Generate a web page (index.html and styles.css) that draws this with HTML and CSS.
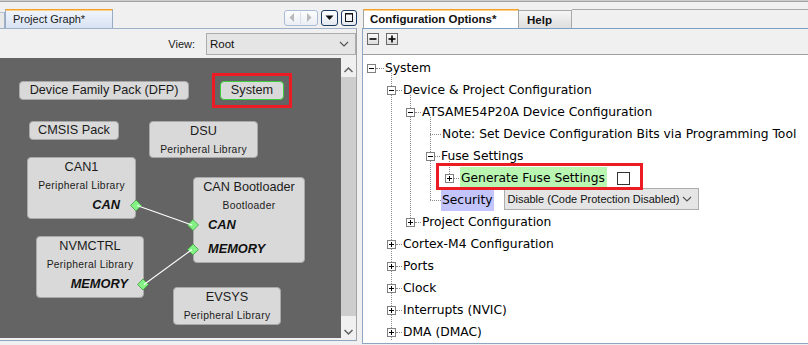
FILE: index.html
```html
<!DOCTYPE html>
<html>
<head>
<meta charset="utf-8">
<title>MHC</title>
<link rel="stylesheet" href="styles.css">
</head>
<body>
<div class="topline"></div>
<div class="main">
  <section class="left">
    <div class="tabstrip">
      <div class="tab-stub"></div>
      <div class="tab-left">Project Graph*</div>
      <div class="tab-fill"></div>
      <div class="navbtns">
        <div class="nav-arrows">
          <svg width="34" height="16" viewBox="0 0 34 16">
            <line x1="16.5" y1="2" x2="16.5" y2="14" stroke="#d7dfe9" stroke-width="1"/>
            <polygon points="10,3 10,12 5.5,7.5" fill="#b9b9b9"/>
            <polygon points="23,3 23,12 27.5,7.5" fill="#b9b9b9"/>
          </svg>
        </div>
        <div class="nav-btn nav-down">
          <svg width="15" height="14" viewBox="0 0 15 14">
            <polygon points="3.5,4.5 11.5,4.5 7.5,9" fill="#111"/>
          </svg>
        </div>
        <div class="nav-btn nav-max">
          <svg width="14" height="14" viewBox="0 0 14 14">
            <rect x="3.5" y="2.5" width="7" height="8" fill="none" stroke="#111" stroke-width="1"/>
            <line x1="3.5" y1="3" x2="10.5" y2="3" stroke="#111" stroke-width="1"/>
          </svg>
        </div>
      </div>
    </div>
    <div class="left-body">
      <div class="viewbar">
        <span class="view-label">View:</span>
        <div class="combo combo-root">
          <span class="combo-text">Root</span>
          <svg class="chev" width="10" height="6" viewBox="0 0 10 6"><polyline points="1,1 5,5 9,1" fill="none" stroke="#555" stroke-width="1.2"/></svg>
        </div>
      </div>
      <div class="graph-row">
        <div class="canvas">
          <div class="node single n-dfp"><div class="nt">Device Family Pack (DFP)</div></div>
          <div class="node single n-sys"><div class="nt">System</div></div>
          <div class="redbox rb-sys"></div>
          <div class="node single n-cmsis"><div class="nt">CMSIS Pack</div></div>
          <div class="node n-dsu"><div class="nt">DSU</div><div class="ns">Peripheral Library</div></div>
          <div class="node n-can1"><div class="nt">CAN1</div><div class="ns">Peripheral Library</div><div class="np pr">CAN</div></div>
          <div class="node n-boot"><div class="nt">CAN Bootloader</div><div class="ns">Bootloader</div><div class="np pl">CAN</div><div class="np pl last">MEMORY</div></div>
          <div class="node n-nvm"><div class="nt">NVMCTRL</div><div class="ns">Peripheral Library</div><div class="np pr">MEMORY</div></div>
          <div class="node n-evsys"><div class="nt">EVSYS</div><div class="ns">Peripheral Library</div></div>
          <svg class="wires" width="341" height="280" viewBox="0 0 341 280">
            <polygon points="136,142 141.5,147.5 136,153 130.5,147.5" fill="#84f184" stroke="#3f9a3f" stroke-width="0.8"/>
            <polygon points="193,161.5 198.5,167 193,172.5 187.5,167" fill="#84f184" stroke="#3f9a3f" stroke-width="0.8"/>
            <polygon points="193,186 198.5,191.5 193,197 187.5,191.5" fill="#84f184" stroke="#3f9a3f" stroke-width="0.8"/>
            <polygon points="143,221 148.5,226.5 143,232 137.5,226.5" fill="#84f184" stroke="#3f9a3f" stroke-width="0.8"/>
            <line x1="137" y1="147.5" x2="192" y2="167" stroke="#ffffff" stroke-width="1.1"/>
            <line x1="144" y1="226.5" x2="192" y2="191.5" stroke="#ffffff" stroke-width="1.1"/>
          </svg>
        </div>
        <div class="vscroll">
          <div class="sb-up">
            <svg width="15" height="19" viewBox="0 0 15 19"><polyline points="3.5,14 7.5,10 11.5,14" fill="none" stroke="#606060" stroke-width="1.5"/></svg>
          </div>
          <div class="sb-thumb"></div>
          <div class="sb-down">
            <svg width="15" height="22" viewBox="0 0 15 22"><polyline points="3.5,14 7.5,18 11.5,14" fill="none" stroke="#606060" stroke-width="1.5"/></svg>
          </div>
        </div>
      </div>
    </div>
  </section>

  <section class="right">
    <div class="rtabstrip">
      <div class="ctab">Configuration Options*</div>
      <div class="htab">Help</div>
      <div class="rfill"></div>
    </div>
    <div class="right-body">
      <div class="toolbar">
        <div class="tbtn">
          <svg width="10" height="10" viewBox="0 0 10 10"><line x1="1.5" y1="5" x2="8.5" y2="5" stroke="#000" stroke-width="1.6"/></svg>
        </div>
        <div class="tbtn">
          <svg width="10" height="10" viewBox="0 0 10 10"><line x1="1.5" y1="5" x2="8.5" y2="5" stroke="#000" stroke-width="1.6"/><line x1="5" y1="1.5" x2="5" y2="8.5" stroke="#000" stroke-width="1.6"/></svg>
        </div>
      </div>
      <div class="tree">
        <svg class="guides" width="445" height="285" viewBox="0 0 445 285">
          <g stroke="#8a8a8a" stroke-width="1" stroke-dasharray="1 1">
            <line x1="28.5" y1="18" x2="28.5" y2="285"/>
            <line x1="47.5" y1="40" x2="47.5" y2="167"/>
            <line x1="67.5" y1="62" x2="67.5" y2="145"/>
            <line x1="86.5" y1="106" x2="86.5" y2="123"/>
          </g>
        </svg>

        <div class="row l0"><span class="exp"><svg width="9" height="9" viewBox="0 0 9 9"><rect x="0.5" y="0.5" width="8" height="8" fill="#fff" stroke="#808080"/><line x1="2" y1="4.5" x2="7" y2="4.5" stroke="#000"/></svg></span><span class="dash"></span><span class="label">System</span></div>
        <div class="row l1"><span class="exp"><svg width="9" height="9" viewBox="0 0 9 9"><rect x="0.5" y="0.5" width="8" height="8" fill="#fff" stroke="#808080"/><line x1="2" y1="4.5" x2="7" y2="4.5" stroke="#000"/></svg></span><span class="dash"></span><span class="label">Device &amp; Project Configuration</span></div>
        <div class="row l2"><span class="exp"><svg width="9" height="9" viewBox="0 0 9 9"><rect x="0.5" y="0.5" width="8" height="8" fill="#fff" stroke="#808080"/><line x1="2" y1="4.5" x2="7" y2="4.5" stroke="#000"/></svg></span><span class="dash"></span><span class="label">ATSAME54P20A Device Configuration</span></div>
        <div class="row leaf3"><span class="dash"></span><span class="label">Note: Set Device Configuration Bits via Programming Tool</span></div>
        <div class="row l3"><span class="exp"><svg width="9" height="9" viewBox="0 0 9 9"><rect x="0.5" y="0.5" width="8" height="8" fill="#fff" stroke="#808080"/><line x1="2" y1="4.5" x2="7" y2="4.5" stroke="#000"/></svg></span><span class="dash"></span><span class="label">Fuse Settings</span></div>
        <div class="row l4"><span class="exp"><svg width="9" height="9" viewBox="0 0 9 9"><rect x="0.5" y="0.5" width="8" height="8" fill="#fff" stroke="#808080"/><line x1="2" y1="4.5" x2="7" y2="4.5" stroke="#000"/><line x1="4.5" y1="2" x2="4.5" y2="7" stroke="#000"/></svg></span><span class="dash"></span><span class="label hl-green">Generate Fuse Settings</span><span class="checkbox"></span></div>
        <div class="row leaf3"><span class="dash"></span><span class="label hl-blue">Security</span>
          <div class="combo combo-sec"><span class="combo-text">Disable (Code Protection Disabled)</span><svg class="chev" width="10" height="6" viewBox="0 0 10 6"><polyline points="1,1 5,5 9,1" fill="none" stroke="#555" stroke-width="1.2"/></svg></div>
        </div>
        <div class="row l2"><span class="exp"><svg width="9" height="9" viewBox="0 0 9 9"><rect x="0.5" y="0.5" width="8" height="8" fill="#fff" stroke="#808080"/><line x1="2" y1="4.5" x2="7" y2="4.5" stroke="#000"/><line x1="4.5" y1="2" x2="4.5" y2="7" stroke="#000"/></svg></span><span class="dash"></span><span class="label">Project Configuration</span></div>
        <div class="row l1"><span class="exp"><svg width="9" height="9" viewBox="0 0 9 9"><rect x="0.5" y="0.5" width="8" height="8" fill="#fff" stroke="#808080"/><line x1="2" y1="4.5" x2="7" y2="4.5" stroke="#000"/><line x1="4.5" y1="2" x2="4.5" y2="7" stroke="#000"/></svg></span><span class="dash"></span><span class="label">Cortex-M4 Configuration</span></div>
        <div class="row l1"><span class="exp"><svg width="9" height="9" viewBox="0 0 9 9"><rect x="0.5" y="0.5" width="8" height="8" fill="#fff" stroke="#808080"/><line x1="2" y1="4.5" x2="7" y2="4.5" stroke="#000"/><line x1="4.5" y1="2" x2="4.5" y2="7" stroke="#000"/></svg></span><span class="dash"></span><span class="label">Ports</span></div>
        <div class="row l1"><span class="exp"><svg width="9" height="9" viewBox="0 0 9 9"><rect x="0.5" y="0.5" width="8" height="8" fill="#fff" stroke="#808080"/><line x1="2" y1="4.5" x2="7" y2="4.5" stroke="#000"/><line x1="4.5" y1="2" x2="4.5" y2="7" stroke="#000"/></svg></span><span class="dash"></span><span class="label">Clock</span></div>
        <div class="row l1"><span class="exp"><svg width="9" height="9" viewBox="0 0 9 9"><rect x="0.5" y="0.5" width="8" height="8" fill="#fff" stroke="#808080"/><line x1="2" y1="4.5" x2="7" y2="4.5" stroke="#000"/><line x1="4.5" y1="2" x2="4.5" y2="7" stroke="#000"/></svg></span><span class="dash"></span><span class="label">Interrupts (NVIC)</span></div>
        <div class="row l1"><span class="exp"><svg width="9" height="9" viewBox="0 0 9 9"><rect x="0.5" y="0.5" width="8" height="8" fill="#fff" stroke="#808080"/><line x1="2" y1="4.5" x2="7" y2="4.5" stroke="#000"/><line x1="4.5" y1="2" x2="4.5" y2="7" stroke="#000"/></svg></span><span class="dash"></span><span class="label">DMA (DMAC)</span></div>

        <div class="redbox rb-fuse"></div>
      </div>
    </div>
  </section>
</div>
</body>
</html>
```

FILE: styles.css
```css
* { box-sizing: border-box; }
html, body { margin: 0; padding: 0; }
body {
  width: 808px;
  height: 345px;
  overflow: hidden;
  background: #f0f0f0;
  font-family: "Liberation Sans", Arial, sans-serif;
  font-size: 11px;
  color: #111;
}

.topline {
  height: 2px;
  border-top: 1px solid #cdcdcd;
  border-bottom: 1px solid #a2a2a2;
}

.main {
  display: flex;
  height: 339px;
}

/* ---------- left panel ---------- */
.left {
  width: 357px;
  display: flex;
  flex-direction: column;
  flex: none;
}

.tabstrip {
  height: 26px;
  display: flex;
  align-items: flex-end;
  flex: none;
}

.tab-stub {
  width: 5px;
  height: 16px;
  background: #e9e9e9;
  border-top: 1px solid #b3c1d2;
  border-right: 1px solid #9fb1c7;
  flex: none;
}

.tab-left {
  width: 108px;
  height: 19px;
  flex: none;
  border: 1px solid #97abc5;
  border-bottom: none;
  border-top: 1px solid #f4a129;
  box-shadow: inset 0 1px 0 #fbd08c;
  background: linear-gradient(#f1f5fc, #d8e3f3);
  padding-left: 7px;
  line-height: 18px;
  font-size: 11px;
  color: #1a1a1a;
}

.tab-fill { flex: 1; }

.navbtns {
  align-self: flex-start;
  margin-top: 8px;
  display: flex;
  gap: 3px;
  flex: none;
}

.nav-arrows {
  width: 34px;
  height: 16px;
  border: 1px solid #a9bcd5;
  border-radius: 3px;
  background: linear-gradient(#fdfdfd, #eaeef4);
  overflow: hidden;
}
.nav-arrows svg { display: block; margin: -1px 0 0 -1px; }

.nav-btn {
  height: 16px;
  border: 1px solid #1d3a62;
  border-radius: 3px;
  background: linear-gradient(#ffffff, #e3e8ef);
  display: flex;
  align-items: center;
  justify-content: center;
}
.nav-down { width: 17px; }
.nav-max { width: 16px; }
.nav-btn svg { display: block; }

.left-body {
  flex: 1;
  display: flex;
  flex-direction: column;
  border-top: 1px solid #9fb1c8;
  border-right: 1px solid #a3a3a3;
  border-bottom: 1px solid #8ea5bf;
}

.viewbar {
  height: 29px;
  flex: none;
  display: flex;
  justify-content: flex-end;
  align-items: flex-start;
  padding-top: 4px;
}

.view-label {
  line-height: 22px;
  margin-right: 11px;
  font-size: 11px;
  color: #1a1a1a;
}

.combo {
  height: 22px;
  background: #e5e5e5;
  border: 1px solid #adadad;
  display: flex;
  align-items: center;
  justify-content: space-between;
  flex: none;
}
.combo-root { width: 150px; padding: 0 6px 0 3px; }
.combo-text { font-size: 11px; color: #111; white-space: nowrap; }
.combo-root .combo-text { font-size: 11.5px; }
.chev { display: block; flex: none; }

.graph-row {
  height: 280px;
  flex: none;
  display: flex;
}

.canvas {
  width: 341px;
  flex: none;
  background: #646464;
  position: relative;
  overflow: hidden;
}

.vscroll {
  width: 15px;
  flex: none;
  display: flex;
  flex-direction: column;
  background: #f0f0f0;
}
.sb-up { height: 19px; flex: none; }
.sb-thumb { height: 239px; flex: none; background: #cdcdcd; }
.sb-down { flex: 1; }
.vscroll svg { display: block; }

/* diagram nodes: placed on a free canvas */
.node {
  position: absolute;
  background: #d9d9d9;
  border: 1px solid #a9a9a9;
  border-radius: 4px;
  color: #1b1b1b;
  text-align: center;
  white-space: nowrap;
}
.nt { font-size: 12.7px; line-height: 18px; }
.single .nt { line-height: 17px; }
.ns { font-size: 10.3px; line-height: 19px; letter-spacing: 0.3px; }
.np { font-size: 12.8px; line-height: 19px; font-weight: bold; font-style: italic; color: #111; }
.np.pr { text-align: right; padding-right: 15px; }
.np.pl { text-align: left; padding-left: 14px; }
.np.last { line-height: 29px; }

.n-dfp { left: 19px; top: 23px; width: 170px; height: 19px; }
.n-sys { left: 220px; top: 23px; width: 64px; height: 19px; border-color: #3ccf3c; }
.n-cmsis { left: 29px; top: 63px; width: 90px; height: 19px; }
.n-dsu { left: 149px; top: 63px; width: 109px; height: 37px; }
.n-can1 { left: 27px; top: 99px; width: 109px; height: 62px; }
.n-boot { left: 193px; top: 119px; width: 112px; height: 86px; }
.n-nvm { left: 36px; top: 178px; width: 108px; height: 62px; }
.n-evsys { left: 173px; top: 229px; width: 108px; height: 38px; }

.wires { position: absolute; left: 0; top: 0; }

.redbox {
  position: absolute;
  border: 3px solid #ec1c24;
}
.rb-sys { left: 212px; top: 15px; width: 80px; height: 35px; }

/* ---------- right panel ---------- */
.right {
  flex: 1;
  margin-left: 5px;
  display: flex;
  flex-direction: column;
}

.rtabstrip {
  height: 26px;
  flex: none;
  display: flex;
  align-items: flex-end;
  padding-left: 1px;
}

.ctab {
  width: 156px;
  height: 19px;
  flex: none;
  background: #ffffff;
  border: 1px solid #a3a3a3;
  border-bottom: none;
  border-top: 1px solid #f4a129;
  box-shadow: inset 0 1px 0 #fbd08c;
  padding-left: 6px;
  line-height: 18px;
  font-weight: bold;
  font-size: 11.5px;
  color: #111;
}

.htab {
  width: 53px;
  height: 18px;
  flex: none;
  background: linear-gradient(#f6f6f6, #dedede);
  border: 1px solid #a8a8a8;
  border-left: none;
  border-bottom: none;
  padding-left: 8px;
  line-height: 18px;
  font-weight: bold;
  font-size: 11.5px;
  color: #111;
}

.rfill {
  flex: 1;
  height: 19px;
  border-top: 1px solid #a9a9a9;
}

.right-body {
  flex: 1;
  display: flex;
  flex-direction: column;
  border-top: 1px solid #7c9fc8;
  border-left: 1px solid #8ea6c1;
  border-bottom: 1px solid #8ea6c1;
}

.toolbar {
  height: 26px;
  flex: none;
  border-bottom: 1px solid #a0a0a0;
  display: flex;
  align-items: flex-start;
  gap: 7px;
  padding: 4px 0 0 4px;
}

.tbtn {
  width: 12px;
  height: 12px;
  border: 1px solid #6a6a6a;
  background: linear-gradient(#fafafa, #dcdcdc);
  display: flex;
  align-items: center;
  justify-content: center;
}
.tbtn svg { display: block; }

.tree {
  flex: 1;
  background: #ffffff;
  position: relative;
  overflow: hidden;
  padding-top: 2px;
}

.guides { position: absolute; left: 0; top: 0; z-index: 0; }

.row {
  position: relative;
  z-index: 1;
  height: 22px;
  display: flex;
  align-items: flex-start;
  white-space: nowrap;
}
.exp { width: 9px; height: 9px; margin-top: 7px; flex: none; }
.exp svg { display: block; }
.dash {
  height: 0;
  margin-top: 11px;
  border-top: 1px dotted #8a8a8a;
  flex: none;
}
.label {
  margin-left: 1px;
  line-height: 22px;
  font-family: "DejaVu Sans", Verdana, sans-serif;
  font-size: 12.3px;
  color: #000;
}

.l0 { padding-left: 4px; }
.l0 .dash { width: 8px; }
.l1 { padding-left: 24px; }
.l1 .dash { width: 6px; }
.l2 { padding-left: 43px; }
.l2 .dash { width: 6px; }
.l3 { padding-left: 63px; }
.l3 .dash { width: 5px; }
.l4 { padding-left: 82px; }
.l4 .dash { width: 5px; }
.leaf3 { padding-left: 67px; }
.leaf3 .dash { width: 11px; }
.leaf3 .label { margin-left: 1px; }

.hl-green {
  background: #b9f6b1;
  padding: 0 2px 0 1px;
}
.leaf3 .hl-blue {
  margin-left: 0;
  background: #c4c4fd;
  padding: 0 1px 0 1px;
}

.checkbox {
  width: 13px;
  height: 13px;
  margin: 5px 0 0 10px;
  border: 1px solid #333333;
  background: #ffffff;
  flex: none;
}

.combo-sec {
  width: 195px;
  margin: -1px 0 0 10px;
  padding: 0 6px 0 3px;
}

.rb-fuse { left: 73px; top: 108px; width: 207px; height: 27px; z-index: 2; }
```
